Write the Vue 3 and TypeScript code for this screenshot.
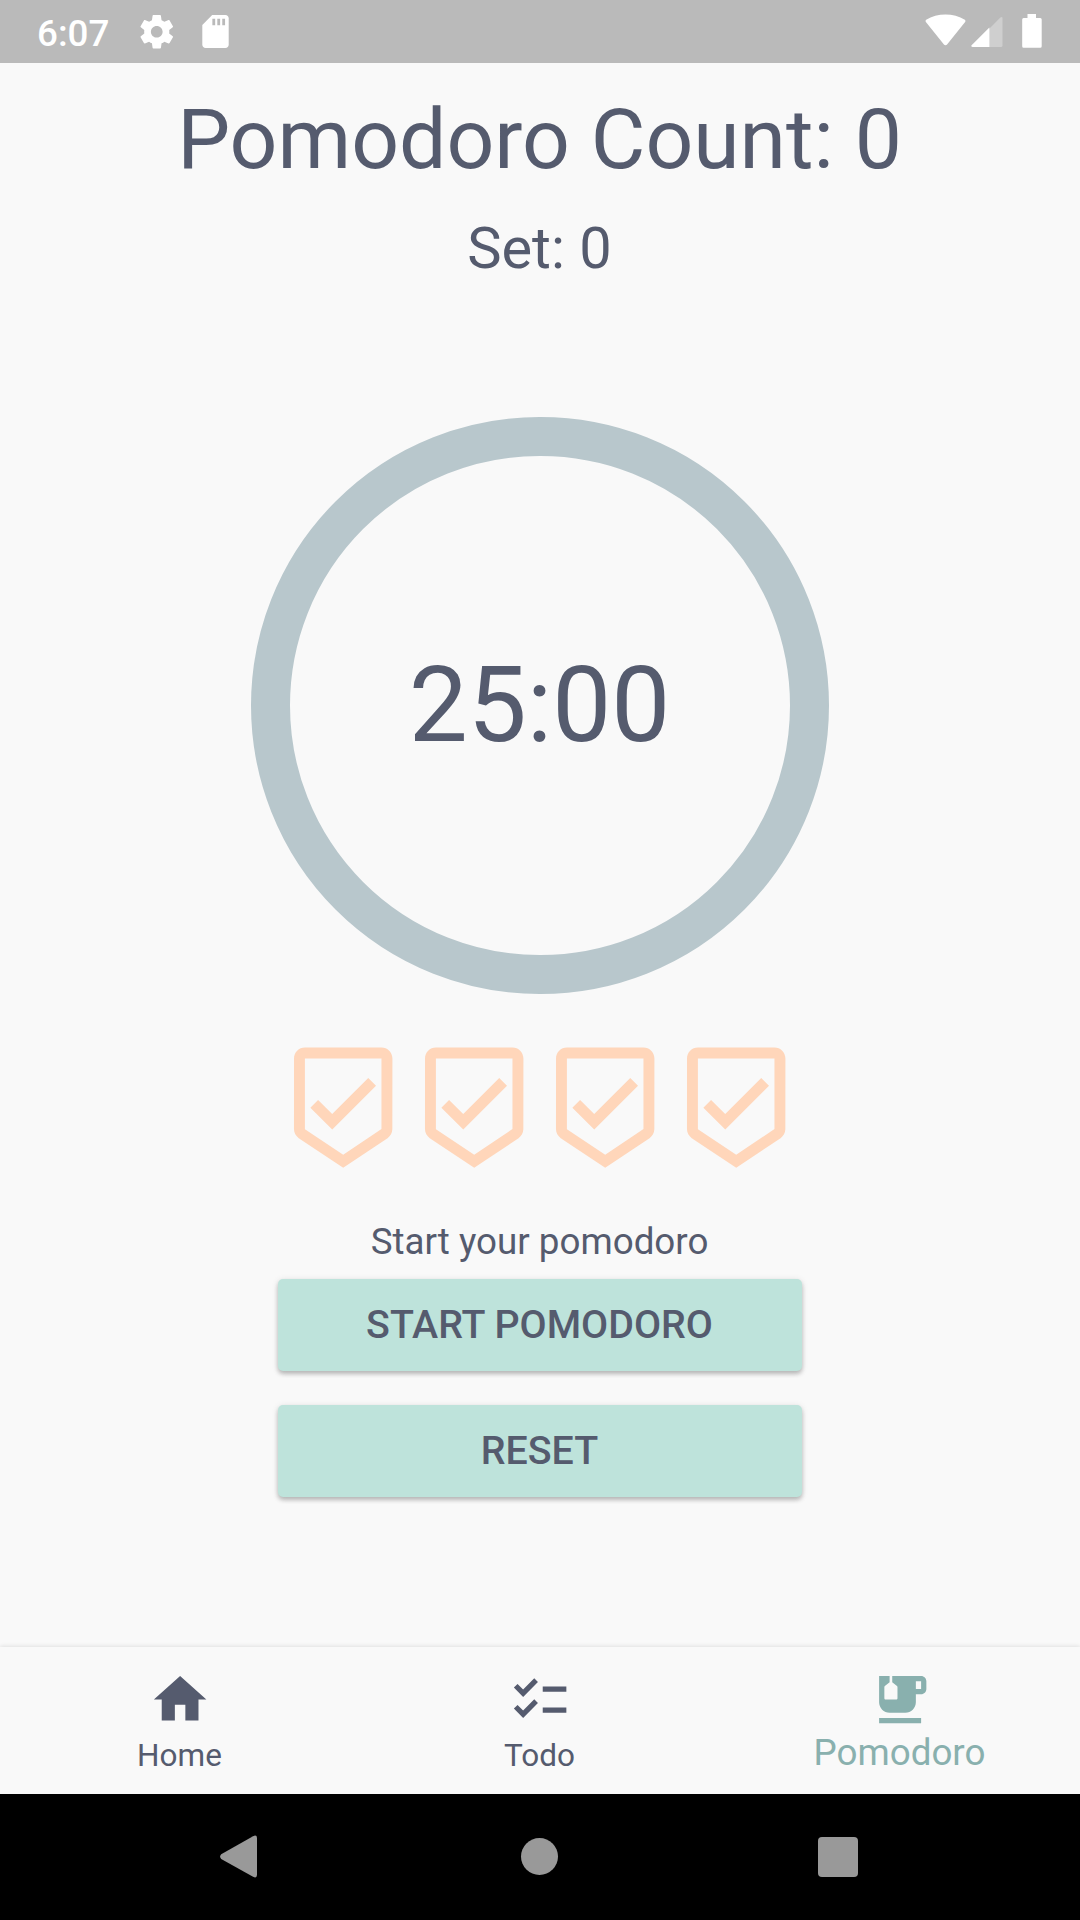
<script setup lang="ts">
import { ref, computed } from 'vue'

interface Tab {
  label: string
  icon: string
}

const pomodoroCount = ref(0)
const setCount = ref(0)
const secondsLeft = ref(25 * 60)
const activeTab = ref('Pomodoro')

const clock = computed(() => {
  const minutes = String(Math.floor(secondsLeft.value / 60)).padStart(2, '0')
  const seconds = String(secondsLeft.value % 60).padStart(2, '0')
  return `${minutes}:${seconds}`
})

const tabs: Tab[] = [
  { label: 'Home', icon: 'M10 20v-6h4v6h5v-8h3L12 3 2 12h3v8z' },
  {
    label: 'Todo',
    icon: 'M22 7h-9v2h9V7zM22 15h-9v2h9v-2zM5.54 11L2 7.46l1.41-1.41 2.12 2.12 4.24-4.24 1.41 1.41L5.54 11zM5.54 19L2 15.46l1.41-1.41 2.12 2.12 4.24-4.24 1.41 1.41L5.54 19z',
  },
  {
    label: 'Pomodoro',
    icon: 'M20 3H9v2.4l1.81 1.45c.12.09.19.24.19.39v4.26c0 .28-.22.5-.5.5h-4c-.28 0-.5-.22-.5-.5V7.24c0-.15.07-.3.19-.39L8 5.4V3H4v10c0 2.21 1.79 4 4 4h6c2.21 0 4-1.79 4-4v-3h2c1.11 0 2-.89 2-2V5c0-1.11-.89-2-2-2zm0 5h-2V5h2v3zM4 19h16v2H4z',
  },
]
</script>

<template>
  <div class="screen">
    <header class="status">
      <span class="time">6:07</span>
      <svg class="gear" viewBox="2 2 20 20">
        <path d="M19.43 12.98c.04-.32.07-.64.07-.98s-.03-.66-.07-.98l2.11-1.65c.19-.15.24-.42.12-.64l-2-3.46c-.12-.22-.39-.3-.61-.22l-2.49 1c-.52-.4-1.08-.73-1.69-.98l-.38-2.65C14.46 2.18 14.25 2 14 2h-4c-.25 0-.46.18-.49.42l-.38 2.65c-.61.25-1.17.59-1.69.98l-2.49-1c-.23-.09-.49 0-.61.22l-2 3.46c-.13.22-.07.49.12.64l2.11 1.65c-.04.32-.07.65-.07.98s.03.66.07.98l-2.11 1.65c-.19.15-.24.42-.12.64l2 3.46c.12.22.39.3.61.22l2.49-1c.52.4 1.08.73 1.69.98l.38 2.65c.03.24.24.42.49.42h4c.25 0 .46-.18.49-.42l.38-2.65c.61-.25 1.17-.59 1.69-.98l2.49 1c.23.09.49 0 .61-.22l2-3.46c.12-.22.07-.49-.12-.64l-2.11-1.65zM12 15.5c-1.93 0-3.5-1.57-3.5-3.5s1.57-3.5 3.5-3.5 3.5 1.57 3.5 3.5-1.57 3.5-3.5 3.5z" />
      </svg>
      <svg class="card" viewBox="4 2 16 20">
        <path d="M18 2h-8L4.02 8 4 20c0 1.1.9 2 2 2h12c1.1 0 2-.9 2-2V4c0-1.1-.9-2-2-2z" />
        <path class="slots" d="M10.1 4.2h1.7v4h-1.7zM13.1 4.2h1.7v4h-1.7zM16.1 4.2h1.7v4h-1.7z" />
      </svg>
      <span class="spacer"></span>
      <svg class="wifi" viewBox="0 0 42 32" preserveAspectRatio="none">
        <path d="M1.1 8.2C.4 7.5.4 6.4 1.2 5.8 12.6-1.4 29.4-1.4 40.8 5.8C41.6 6.4 41.6 7.5 40.9 8.2L22.6 30.5C21.7 31.6 20.3 31.6 19.4 30.5Z" />
      </svg>
      <svg class="signal" viewBox="0 0 32 32">
        <path class="dim" d="M18 13L29.3 1.6Q31.5 0 31.5 2V29.5Q31.5 31 30 31H18Z" />
        <path d="M18.4 11.5V31H1.5Q-.5 30.6.6 29.2Z" />
      </svg>
      <svg class="battery" viewBox="0 0 20 34">
        <path d="M5.5 0H14V4H18.3Q19.7 4 19.7 5.5V32.3Q19.7 33.8 18.3 33.8H1.6Q.2 33.8.2 32.3V5.5Q.2 4 1.6 4H5.5Z" />
      </svg>
    </header>

    <main class="content">
      <h1 class="title">Pomodoro Count: {{ pomodoroCount }}</h1>
      <h2 class="set">Set: {{ setCount }}</h2>
      <div class="ring"><span>{{ clock }}</span></div>
      <div class="badges">
        <svg v-for="n in 4" :key="n" viewBox="0.08 0 24 24">
          <path d="M19 1H5c-1.1 0-1.99.9-1.99 2L3 15.93c0 .69.35 1.3.88 1.66L12 23l8.11-5.41c.53-.36.88-.97.88-1.66L21 3c0-1.1-.9-2-2-2zm-7 19.6l-7-4.66V3h14v12.93l-7 4.67zm-2.01-7.42l-2.58-2.59L6 12l4 4 8-8-1.42-1.42z" />
        </svg>
      </div>
      <p class="hint">Start your pomodoro</p>
      <button class="action" type="button">START POMODORO</button>
      <button class="action" type="button">RESET</button>
    </main>

    <nav class="tabs">
      <div v-for="tab in tabs" :key="tab.label" class="tab" :class="{ active: tab.label === activeTab }">
        <svg viewBox="0.15 0 24 24"><path fill-rule="evenodd" :d="tab.icon" /></svg>
        <span>{{ tab.label }}</span>
      </div>
    </nav>

    <footer class="system">
      <svg class="back" viewBox="0 0 38 43"><path d="M1.2 19.2L33.5.9Q37.5-1 37.5 3V40Q37.5 44 33.5 42L1.2 24Q-1 21.6 1.2 19.2Z" /></svg>
      <span class="home"></span>
      <span class="recent"></span>
    </footer>
  </div>
</template>

<style>
body {
  margin: 0;
  background: #f9f9f9;
}
</style>

<style scoped>
.screen {
  display: flex;
  flex-direction: column;
  width: 1080px;
  height: 1920px;
  overflow: hidden;
  background: #f9f9f9;
  color: #555b6e;
  font-family: Roboto, "Liberation Sans", sans-serif;
}

svg {
  display: block;
  flex: none;
  fill: currentColor;
}

.status {
  display: flex;
  align-items: flex-start;
  box-sizing: border-box;
  height: 63px;
  padding: 14px 38.5px 0 37px;
  background: #bababa;
  color: #fff;
}

.time {
  width: 103px;
  font-size: 36.75px;
  font-weight: 500;
  line-height: 40px;
}

.gear {
  width: 33.5px;
  height: 33.5px;
  margin-top: 1px;
}

.card {
  width: 27px;
  height: 33px;
  margin: 1px 0 0 28px;
}

.slots {
  fill: #bababa;
}

.spacer {
  flex: 1;
}

.wifi {
  width: 41px;
  height: 32px;
  margin-right: 5px;
}

.signal {
  width: 32px;
  height: 32px;
  margin: 2px 19px 0 0;
}

.dim {
  opacity: 0.3;
}

.battery {
  width: 20px;
  height: 34px;
}

.content {
  display: flex;
  flex-direction: column;
  align-items: center;
  height: 1584px;
  padding-right: 1px;
}

.title,
.set,
.hint {
  margin: 0;
  font-weight: 400;
  white-space: nowrap;
}

.title {
  margin-top: 27px;
  font-size: 84px;
  line-height: 100px;
}

.set {
  margin-top: 23px;
  font-size: 57.75px;
  line-height: 70px;
}

.ring {
  display: flex;
  align-items: center;
  justify-content: center;
  box-sizing: border-box;
  width: 577.5px;
  height: 577.5px;
  margin: 133.5px 0 0 1px;
  border: 39.4px solid #b8c7cc;
  border-radius: 50%;
  font-size: 105px;
}

.ring span {
  margin-right: 1px;
}

.badges {
  display: flex;
  margin: 48px 0 0 1px;
  color: #ffd6ba;
}

.badges svg {
  width: 131.25px;
  height: 131.25px;
}

.hint {
  margin-top: 46.75px;
  font-size: 36.75px;
  line-height: 44px;
}

.action {
  width: 524px;
  height: 92px;
  margin: 15px 0 0 1px;
  padding: 0 1px 2px 0;
  border: 0;
  border-radius: 5px;
  background: #bee3db;
  box-shadow: 0 3px 4px rgba(0, 0, 0, 0.22), 0 1px 7px rgba(0, 0, 0, 0.1);
  color: #555b6e;
  font: 500 39.375px Roboto, "Liberation Sans", sans-serif;
}

.action + .action {
  margin-top: 34px;
}

.tabs {
  display: flex;
  height: 147px;
  background: #f9f9f9;
  box-shadow: 0 -1px 4px rgba(0, 0, 0, 0.1);
}

.tab {
  display: flex;
  flex: 1;
  flex-direction: column;
  align-items: center;
}

.tab svg {
  width: 63px;
  height: 63px;
  margin-top: 21px;
}

.tab span {
  margin: 5px 1px 0 0;
  font-size: 31.5px;
  line-height: 40px;
}

.tab.active {
  color: #89b0ae;
}

.tab.active span {
  margin-top: 2px;
  font-size: 36.75px;
}

.system {
  z-index: 1;
  display: flex;
  align-items: center;
  box-sizing: border-box;
  height: 126px;
  padding: 0 0 1px 219.5px;
  background: #000;
  color: #999;
}

.back {
  width: 37.5px;
  height: 43px;
}

.home {
  width: 37px;
  height: 37px;
  margin-left: 264px;
  border-radius: 50%;
  background: #999;
}

.recent {
  width: 40px;
  height: 40px;
  margin-left: 260px;
  border-radius: 4px;
  background: #999;
}
</style>
